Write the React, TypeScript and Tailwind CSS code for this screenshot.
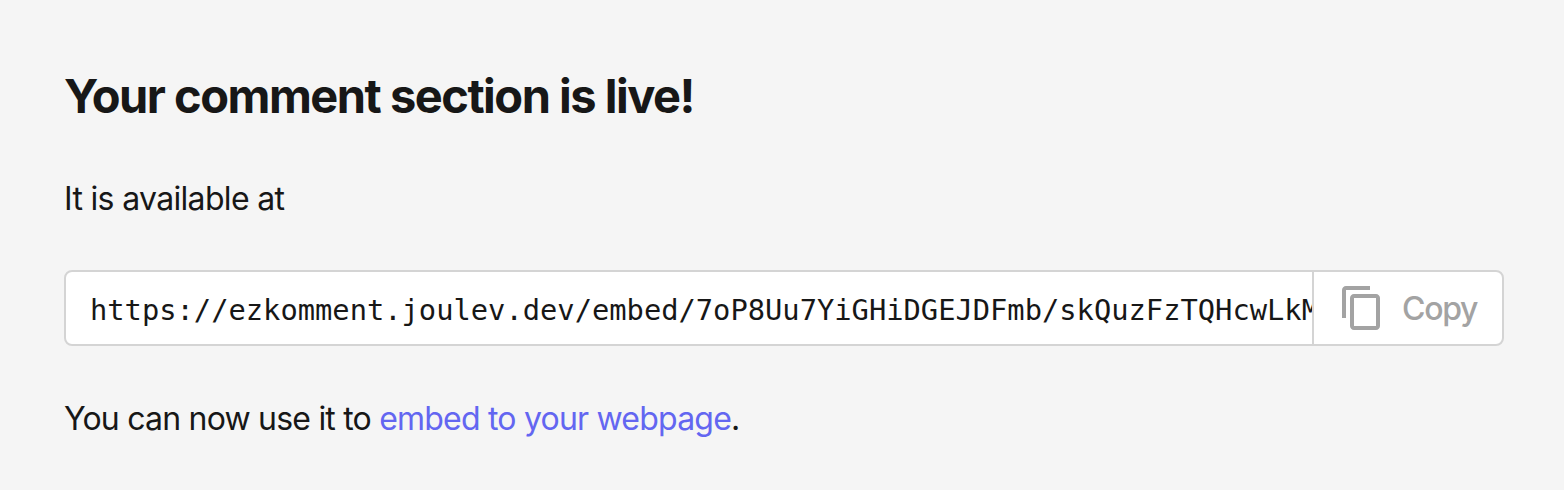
export default function App() {
  return (
    <main className="h-[490px] w-full bg-[#f5f5f5] px-16 pt-16 font-['Inter',sans-serif] text-[32px] leading-[48px] text-[#171717]">
      <h1 className="text-[47px] leading-[63px] font-bold tracking-[-1.5px] whitespace-nowrap">Your comment section is live!</h1>
      <p className="mt-[48px] whitespace-nowrap tracking-[-0.67px]">It is available at</p>
      <div className="mt-[47px] flex h-[76px] w-[1440px] overflow-hidden rounded-lg border-2 border-[#d4d4d4] bg-white">
        <div className="w-[1246px] shrink-0 overflow-hidden pl-6 font-['DejaVu_Sans_Mono',monospace] text-[28.75px] leading-[76px] whitespace-nowrap">
          https://ezkomment.joulev.dev/embed/7oP8Uu7YiGHiDGEJDFmb/skQuzFzTQHcwLkM
        </div>
        <button className="flex flex-1 items-center border-l-2 border-[#d4d4d4] pl-6 font-medium text-[#a3a3a3]">
          <svg viewBox="0 0 24 24" className="size-12" fill="currentColor"><path d="M16 1H4c-1.1 0-2 .9-2 2v14h2V3h12V1zm3 4H8c-1.1 0-2 .9-2 2v14c0 1.1.9 2 2 2h11c1.1 0 2-.9 2-2V7c0-1.1-.9-2-2-2zm0 16H8V7h11v14z" /></svg>
          <span className="ml-4 pt-[2px] tracking-[-1.3px]">Copy</span>
        </button>
      </div>
      <p className="mt-[49px] whitespace-nowrap tracking-[-0.79px]">
        You can now use it to <a className="text-[#6366f1]">embed to your webpage</a>.
      </p>
    </main>
  );
}
